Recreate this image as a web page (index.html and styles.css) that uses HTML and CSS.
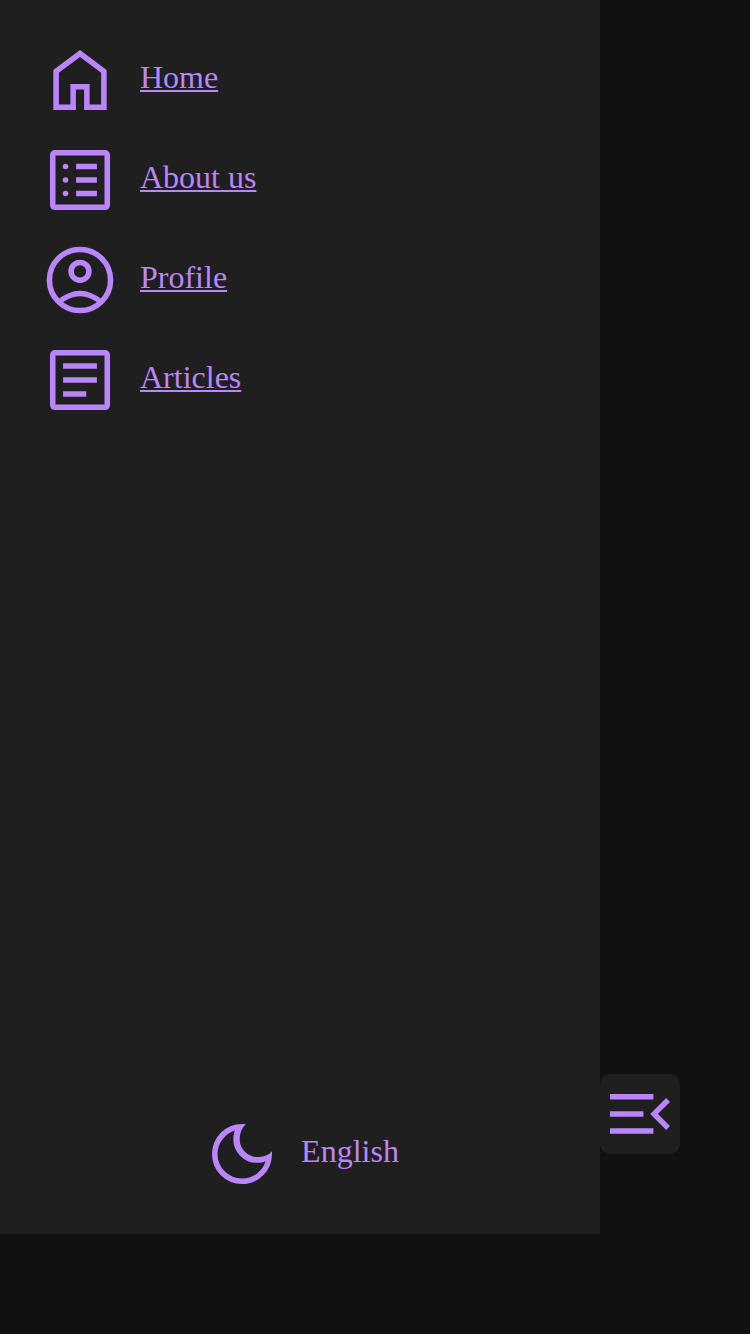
FILE: index.html
```html
<!DOCTYPE html>
<html lang="en">
<head>
<meta charset="utf-8">
<title>Navigation</title>
<link rel="stylesheet" href="styles.css">
</head>
<body>
<aside class="sidebar">
  <nav class="nav">
    <div class="nav-item">
      <svg class="icon" viewBox="0 0 80 80"><path fill-rule="evenodd" d="M13.33 70V30L40 10 66.67 30V70H44.1V49.5H35.9V70ZM18.85 64.5H30.4V44H49.6V64.5H61.15V32.75L40 17 18.85 32.75Z"/></svg>
      <a class="label" href="#">Home</a>
    </div>
    <div class="nav-item">
      <svg class="icon" viewBox="0 0 80 80"><path fill-rule="evenodd" d="M15.5 10H64.5Q70 10 70 15.5V64.5Q70 70 64.5 70H15.5Q10 70 10 64.5V15.5Q10 10 15.5 10ZM15.5 15.5V64.5H64.5V15.5Z"/><path d="M36.1 23.7H56.9V29.3H36.1ZM36.1 37.2H56.9V42.8H36.1ZM36.1 50.7H56.9V56.3H36.1Z"/><circle cx="25.5" cy="26.5" r="2.8"/><circle cx="25.5" cy="40" r="2.8"/><circle cx="25.5" cy="53.5" r="2.8"/></svg>
      <a class="label" href="#">About us</a>
    </div>
    <div class="nav-item">
      <svg class="icon icon-line" viewBox="0 0 80 80"><circle cx="40" cy="40" r="30.58"/><circle cx="40" cy="31.3" r="8.9"/><path d="M18.5 62.3Q40 44.7 61.5 62.3"/></svg>
      <a class="label" href="#">Profile</a>
    </div>
    <div class="nav-item">
      <svg class="icon" viewBox="0 0 80 80"><path fill-rule="evenodd" d="M15.5 10H64.5Q70 10 70 15.5V64.5Q70 70 64.5 70H15.5Q10 70 10 64.5V15.5Q10 10 15.5 10ZM15.5 15.5V64.5H64.5V15.5Z"/><path d="M23.1 23.2H56.9V28.8H23.1ZM23.1 37.2H56.9V42.8H23.1ZM23.1 51.2H46.3V56.8H23.1Z"/></svg>
      <a class="label" href="#">Articles</a>
    </div>
  </nav>
  <div class="settings">
    <svg class="icon" viewBox="0 -960 960 960"><path d="M480-120q-150 0-255-105T120-480q0-150 105-255t255-105q8 0 17 .5t30 1.5q-38 32-56 79t-19 99q0 90 63 153t153 63q52 0 99-18.5t71-51.5q1 12 1.5 19.5t.5 14.5q0 150-105 255T480-120Zm0-66q101 0 178-58t106-148q-24 9-50 13.5t-54 4.5q-117 0-200.5-83.5T376-658q0-26 4.5-52.5T394-762q-90 29-149 106.5T186-480q0 122 86 208t208 86Z"/></svg>
    <span class="label">English</span>
  </div>
  <button class="toggle" aria-label="Close menu">
    <svg class="icon" viewBox="0 0 80 80"><path d="M10 20H53.4V25.5H10ZM10 37.25H43.4V42.75H10ZM10 54.3H53.4V59.8H10ZM66.2 24.1 70 28 57.9 40 70 52 66.2 55.9 50.2 40Z"/></svg>
  </button>
</aside>
</body>
</html>
```
FILE: styles.css
```css
body {
  margin: 0;
  min-height: 100vh;
  background: #111111;
  color: #bb86fc;
  font: 32px/36px "Liberation Serif", serif;
}

.sidebar {
  position: relative;
  box-sizing: border-box;
  display: flex;
  flex-direction: column;
  justify-content: space-between;
  width: 600px;
  height: 1234px;
  padding: 40px;
  background: #1f1f1f;
}

.nav {
  display: flex;
  flex-direction: column;
  gap: 20px;
}

.nav-item,
.settings {
  display: flex;
  align-items: center;
  gap: 20px;
}

.settings {
  justify-content: center;
  gap: 19px;
  padding-left: 1px;
}

.icon {
  display: block;
  flex: none;
  width: 80px;
  height: 80px;
  fill: #bb86fc;
}

.icon-line {
  fill: none;
  stroke: #bb86fc;
  stroke-width: 5.5;
}

.label {
  color: inherit;
  padding-bottom: 6px;
  text-decoration-thickness: 2px;
  text-underline-offset: 2px;
}

.toggle {
  position: absolute;
  left: 100%;
  bottom: 80px;
  padding: 0;
  border: 0;
  border-radius: 10px;
  background: #1f1f1f;
}
```
